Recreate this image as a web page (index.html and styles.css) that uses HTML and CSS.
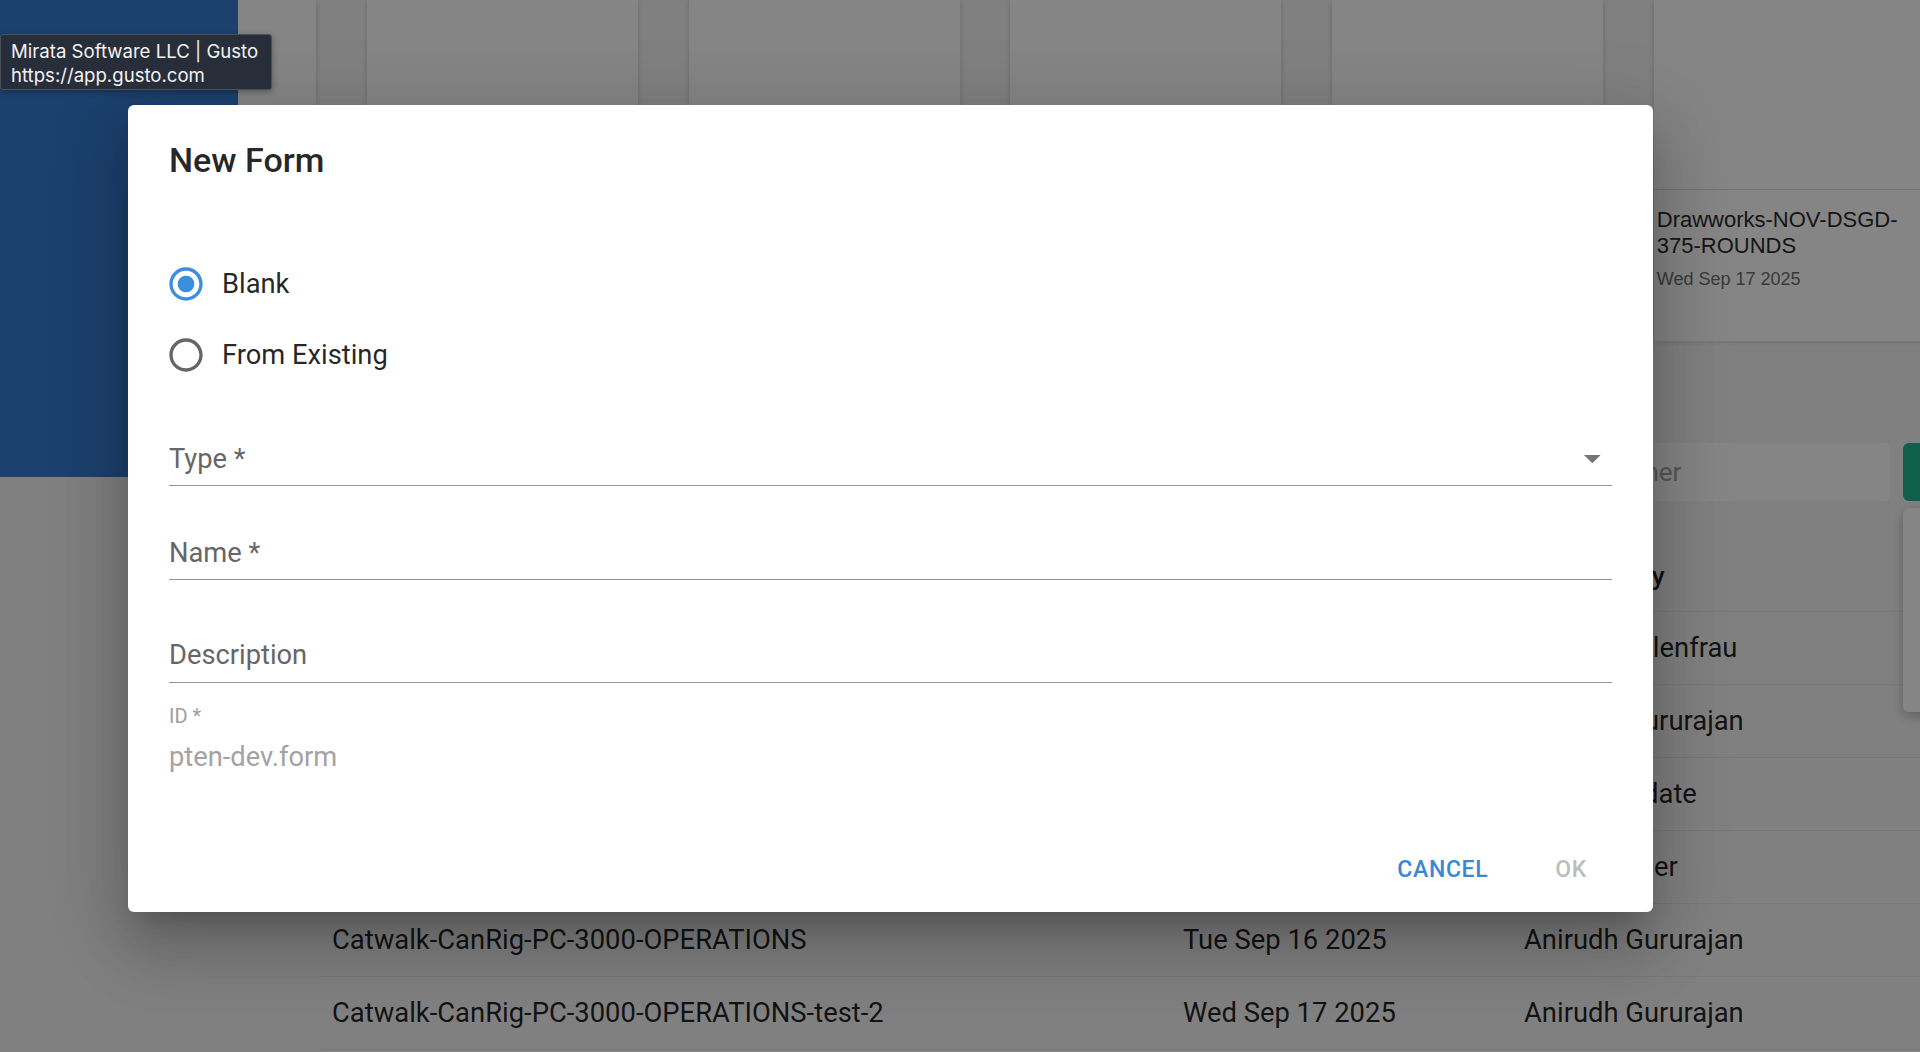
FILE: index.html
```html
<!DOCTYPE html>
<html lang="en">
<head>
<meta charset="utf-8">
<title>New Form</title>
<link rel="stylesheet" href="styles.css">
</head>
<body>
<div class="page">
  <aside class="hero"></aside>
  <main class="main">
    <div class="strip">
      <div class="card"><div class="card-img"></div></div>
      <div class="card"><div class="card-img"></div><div class="card-body"><div class="card-title">Iron-Roughneck-ST-80-WEEKLY</div><div class="card-date">Mon Sep 15 2025</div></div></div>
      <div class="card"><div class="card-img"></div><div class="card-body"><div class="card-title">Top-Drive-TDS-11SA-MONTHLY</div><div class="card-date">Mon Sep 15 2025</div></div></div>
      <div class="card"><div class="card-img"></div><div class="card-body"><div class="card-title">Catwalk-CanRig-PC-3000-OPERATIONS</div><div class="card-date">Tue Sep 16 2025</div></div></div>
      <div class="card"><div class="card-img"></div><div class="card-body"><div class="card-title">Catwalk-CanRig-PC-3000-DAILY</div><div class="card-date">Tue Sep 16 2025</div></div></div>
      <div class="card"><div class="card-img"></div><div class="card-body"><div class="card-title">Drawworks-NOV-DSGD-375-ROUNDS</div><div class="card-date">Wed Sep 17 2025</div></div></div>
    </div>

    <div class="toolbar">
      <div class="field-box search">Search forms</div>
      <div class="field-box owner">Owner</div>
      <div class="add-btn"></div>
    </div>

    <div class="table">
      <div class="trow thead"><div>Name</div><div>Last Modified</div><div>Modified By</div></div>
      <div class="trow"><div>Drawworks-NOV-DSGD-375-ROUNDS</div><div>Wed Sep 17 2025</div><div>Daniel Mollenfrau</div></div>
      <div class="trow"><div>Catwalk-CanRig-PC-3000-DAILY</div><div>Tue Sep 16 2025</div><div>Anirudh Gururajan</div></div>
      <div class="trow"><div>Top-Drive-TDS-11SA-MONTHLY</div><div>Mon Sep 15 2025</div><div>Admin Update</div></div>
      <div class="trow"><div>Iron-Roughneck-ST-80-WEEKLY</div><div>Mon Sep 15 2025</div><div>Rig Manager</div></div>
      <div class="trow"><div>Catwalk-CanRig-PC-3000-OPERATIONS</div><div>Tue Sep 16 2025</div><div>Anirudh Gururajan</div></div>
      <div class="trow"><div>Catwalk-CanRig-PC-3000-OPERATIONS-test-2</div><div>Wed Sep 17 2025</div><div>Anirudh Gururajan</div></div>
    </div>
  </main>
</div>

<div class="menu"></div>
<div class="backdrop"></div>

<div class="dialog" role="dialog">
  <h2 class="dlg-title">New Form</h2>
  <div class="radios">
    <label class="radio">
      <svg class="radio-icon checked" viewBox="0 0 24 24" width="40" height="40"><path d="M12 2C6.48 2 2 6.48 2 12s4.48 10 10 10 10-4.48 10-10S17.52 2 12 2zm0 18c-4.42 0-8-3.58-8-8s3.58-8 8-8 8 3.58 8 8-3.58 8-8 8z"/><circle cx="12" cy="12" r="5"/></svg>
      <span>Blank</span>
    </label>
    <label class="radio">
      <svg class="radio-icon" viewBox="0 0 24 24" width="40" height="40"><path d="M12 2C6.48 2 2 6.48 2 12s4.48 10 10 10 10-4.48 10-10S17.52 2 12 2zm0 18c-4.42 0-8-3.58-8-8s3.58-8 8-8 8 3.58 8 8-3.58 8-8 8z"/></svg>
      <span>From Existing</span>
    </label>
  </div>

  <div class="field f-type">
    <span class="flabel">Type *</span>
    <svg class="caret" viewBox="7 10 10 5" width="16.6" height="8.3"><path d="M7 10l5 5 5-5z"/></svg>
  </div>
  <div class="field f-name"><span class="flabel">Name *</span></div>
  <div class="field f-desc"><span class="flabel">Description</span></div>

  <div class="id-label">ID *</div>
  <div class="id-value">pten-dev.form</div>

  <div class="actions">
    <button class="btn btn-cancel">Cancel</button>
    <button class="btn btn-ok">OK</button>
  </div>
</div>

<div class="tooltip">
  <div>Mirata Software LLC | Gusto</div>
  <div>https://app.gusto.com</div>
</div>
</body>
</html>
```

FILE: styles.css
```css
* { box-sizing: border-box; }
html, body { margin: 0; padding: 0; }
body {
  width: 1920px;
  height: 1052px;
  overflow: hidden;
  position: relative;
  background: #f6f6f6;
  font-family: Roboto, "Noto Sans", sans-serif;
  color: rgba(0,0,0,0.87);
}

/* ---------- background page ---------- */
.page {
  display: grid;
  grid-template-columns: 238px 1fr;
  height: 1052px;
  align-items: start;
}
.hero { background: #377ed3; height: 477px; }
.main { min-width: 0; overflow: hidden; height: 1052px; }

.strip { display: flex; gap: 50.75px; height: 341px; }
.card {
  flex: 0 0 271px;
  background: #fff;
  display: flex;
  flex-direction: column;
  box-shadow: 0 0 6px rgba(0,0,0,0.18);
}
.card:first-child { margin-left: -193px; }
.card-img { height: 190px; flex: none; border-bottom: 1.5px solid #dcdcdc; }
.card-body { padding: 17px 6px 0 3px; font-family: "Liberation Sans", Arial, sans-serif; }
.card-title { font-size: 22px; line-height: 25.5px; color: #2b2b2b; }
.card-date { font-size: 18px; line-height: 22px; color: #707070; margin-top: 10px; }

.toolbar {
  display: flex;
  gap: 13px;
  margin: 102px 0 0 83px;
  height: 58px;
}
.field-box {
  flex: none;
  height: 58px;
  background: #fff;
  border-radius: 6px;
  display: flex;
  align-items: center;
  padding-left: 2px;
  font-size: 26px;
  color: #a8a8a8;
}
.search { width: 1271px; }
.owner { width: 285px; }
.add-btn { flex: none; width: 160px; height: 58px; background: #1fb78f; border-radius: 6px; }

.table { margin: 39px 0 0 83px; width: 1599px; }
.trow {
  display: grid;
  grid-template-columns: 851px 341px 1fr;
  height: 73px;
  align-items: center;
  border-bottom: 1px solid #e6e6e6;
  font-size: 27.4px;
  color: rgba(0,0,0,0.87);
  white-space: nowrap;
}
.trow > div { padding-left: 11px; }
.trow.thead { height: 72px; font-weight: 500; font-size: 26.5px; }

.menu {
  position: absolute;
  left: 1903px;
  top: 508px;
  width: 220px;
  height: 204px;
  background: #fff;
  border-radius: 6px;
  box-shadow: 0 4px 12px rgba(0,0,0,0.25);
}

.backdrop {
  position: absolute;
  inset: 0;
  background: rgba(0,0,0,0.48);
}

/* ---------- dialog ---------- */
.dialog {
  position: absolute;
  left: 128px;
  top: 105px;
  width: 1525px;
  height: 807px;
  background: #fff;
  border-radius: 6px;
  padding: 35px 41px 0;
  display: flex;
  flex-direction: column;
  box-shadow: 0 18px 25px -12px rgba(0,0,0,0.2), 0 40px 63px 5px rgba(0,0,0,0.14), 0 15px 76px 13px rgba(0,0,0,0.12);
}
.dlg-title {
  margin: 0;
  font-size: 34px;
  line-height: 40px;
  font-weight: 500;
  color: rgba(0,0,0,0.87);
}
.radios { margin-top: 68.7px; display: flex; flex-direction: column; }
.radio {
  height: 71px;
  display: flex;
  align-items: center;
  font-size: 27.3px;
  color: rgba(0,0,0,0.87);
}
.radio-icon { flex: none; margin-left: -3.3px; margin-right: 16.3px; fill: #666; }
.radio-icon.checked { fill: #3b8ddd; }

.field {
  display: flex;
  align-items: flex-start;
  padding-bottom: 10px;
  border-bottom: 1.5px solid #949494;
}
.flabel { flex: 1; font-size: 27.3px; line-height: 32px; color: #666; }
.f-type { margin-top: 52.3px; }
.f-name { margin-top: 51.5px; }
.f-desc { margin-top: 58.7px; padding-bottom: 11px; }
.caret { flex: none; margin-top: 12.2px; margin-right: 11.4px; fill: #757575; }

.id-label { margin-top: 21px; font-size: 20px; line-height: 24px; color: #9e9e9e; }
.id-value { margin-top: 12.8px; font-size: 27.3px; line-height: 32px; color: #a3a3a3; }

.actions {
  margin-top: 83px;
  display: flex;
  justify-content: flex-end;
  gap: 67px;
  padding-right: 25px;
}
.btn {
  border: 0;
  background: none;
  padding: 0;
  font-family: Roboto, sans-serif;
  font-size: 23px;
  line-height: 28px;
  font-weight: 500;
  letter-spacing: 0.66px;
  text-transform: uppercase;
}
.btn-cancel { color: #3a87d6; }
.btn-ok { color: #bdbdbd; }

/* ---------- browser tooltip ---------- */
.tooltip {
  position: absolute;
  left: 0;
  top: 34px;
  width: 272px;
  height: 56px;
  padding: 4px 0 0 10px;
  background: #272e3a;
  border: 1px solid #4b515b;
  border-radius: 3px;
  font-family: Inter, "Noto Sans", sans-serif;
  font-size: 18.6px;
  line-height: 24px;
  color: #f2f2f2;
  box-shadow: 0 2px 6px rgba(0,0,0,0.3);
  white-space: nowrap;
}
```
